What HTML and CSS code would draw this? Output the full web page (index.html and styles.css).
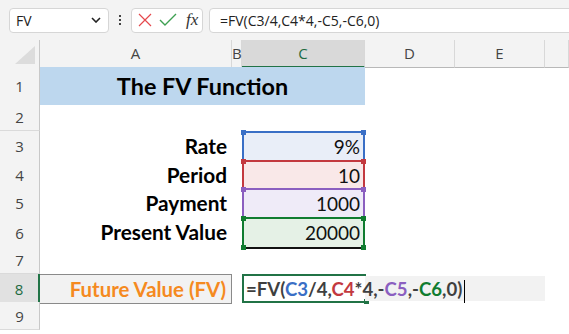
FILE: index.html
```html
<!DOCTYPE html>
<html lang="en">
<head>
    <meta charset="UTF-8">
    <title>FV Function</title>
    <link rel="stylesheet" href="styles.css">
</head>
<body>
    <div class="toolbar">
        <div class="namebox">
            <span>FV</span>
            <svg width="10" height="6" viewBox="0 0 10 6"><path d="M1 1 L5 5 L9 1" fill="none" stroke="#222" stroke-width="1.6"/></svg>
        </div>
        <div class="dots"><i></i><i></i><i></i></div>
        <div class="fxbox">
            <svg width="14" height="14" viewBox="0 0 14 14"><path d="M1 1 L13 13 M13 1 L1 13" stroke="#e5484d" stroke-width="1.2"/></svg>
            <svg width="18" height="14" viewBox="0 0 18 14"><path d="M1 7 L6 12 L17 1" fill="none" stroke="#3ea052" stroke-width="1.4"/></svg>
            <span class="fx">fx</span>
        </div>
        <div class="formula">=FV(C3/4,C4*4,-C5,-C6,0)</div>
    </div>

    <div class="sheet">
        <div class="row r-head">
            <div class="corner"><svg width="20" height="18" viewBox="0 0 20 18"><path d="M20 0 L20 18 L0 18 Z" fill="#dcdcdc"/></svg></div>
            <div class="colhead">A</div>
            <div class="colhead">B</div>
            <div class="colhead active">C</div>
            <div class="colhead">D</div>
            <div class="colhead">E</div>
            <div class="colhead"></div>
        </div>

        <div class="row r-title">
            <div class="rowhead">1</div>
            <div class="title">The FV Function</div>
        </div>

        <div class="row r-28">
            <div class="rowhead">2</div>
        </div>

        <div class="row r-29">
            <div class="rowhead">3</div>
            <div class="label">Rate</div>
            <div></div>
            <div class="value blue"><span class="sq tl"></span><span class="sq tr"></span>9%</div>
        </div>

        <div class="row r-28">
            <div class="rowhead">4</div>
            <div class="label">Period</div>
            <div></div>
            <div class="value red"><span class="sq tl"></span><span class="sq tr"></span>10</div>
        </div>

        <div class="row r-29">
            <div class="rowhead">5</div>
            <div class="label">Payment</div>
            <div></div>
            <div class="value purple"><span class="sq tl"></span><span class="sq tr"></span>1000</div>
        </div>

        <div class="row r-29">
            <div class="rowhead">6</div>
            <div class="label">Present Value</div>
            <div></div>
            <div class="value green last"><span class="sq tl"></span><span class="sq tr"></span><span class="sq bl"></span><span class="sq br"></span>20000</div>
        </div>

        <div class="row r-28">
            <div class="rowhead">7</div>
        </div>

        <div class="row r-28">
            <div class="rowhead active">8</div>
            <div class="result">Future Value (FV)</div>
            <div></div>
            <div class="editing">
                <div class="editbox"><span class="sq br"></span></div>
                <div class="edittext">=FV(<span class="c-blue">C3</span>/4,<span class="c-red">C4</span>*4,-<span class="c-purple">C5</span>,-<span class="c-green">C6</span>,0)<span class="caret"></span></div>
            </div>
        </div>

        <div class="row r-28">
            <div class="rowhead">9</div>
        </div>
    </div>
</body>
</html>
```

FILE: styles.css
```css
* {
    box-sizing: border-box;
}
body {
    margin: 0;
    width: 569px;
    height: 334px;
    overflow: hidden;
    background: #fff;
    font-family: Lato, "Open Sans", sans-serif;
}

/* formula bar */
.toolbar {
    height: 40px;
    background: #f3f3f3;
    display: flex;
    align-items: center;
    padding-left: 9px;
}
.namebox {
    width: 100px;
    height: 25px;
    background: #fff;
    border: 1px solid #d6d6d6;
    border-radius: 4px;
    display: flex;
    align-items: center;
    justify-content: space-between;
    padding: 0 7px 0 6px;
    font-family: "Open Sans", sans-serif;
    font-size: 14px;
    color: #222;
}
.dots {
    width: 22px;
    display: flex;
    flex-direction: column;
    align-items: center;
    gap: 2px;
}
.dots i {
    width: 2px;
    height: 2px;
    background: #444;
}
.fxbox {
    width: 72px;
    height: 25px;
    background: #fff;
    border: 1px solid #d6d6d6;
    border-radius: 4px;
    display: flex;
    align-items: center;
    gap: 7px;
    padding-left: 6px;
}
.fx {
    font-family: "Liberation Serif", serif;
    font-style: italic;
    font-size: 17px;
    color: #333;
    margin-left: 2px;
}
.formula {
    flex: 1;
    height: 25px;
    margin-left: 6px;
    margin-right: -8px;
    background: #fff;
    border: 1px solid #d6d6d6;
    border-radius: 4px;
    padding-left: 10px;
    font-family: "Open Sans", sans-serif;
    font-size: 14px;
    line-height: 23px;
    color: #222;
}

/* grid */
.row {
    display: grid;
    grid-template-columns: 40px 192px 10px 123px 90px 90px 1fr;
    height: 28px;
}
.r-head {
    height: 27px;
    background: #f3f3f3;
}
.r-title {
    height: 36px;
}
.r-29 {
    height: 29px;
}
.corner {
    border-right: 1px solid #c8c8c8;
    border-bottom: 1px solid #b8b8b8;
    display: flex;
    align-items: flex-end;
    justify-content: flex-end;
    padding: 0 4px 3px 0;
}
.colhead {
    border-right: 1px solid #d8d8d8;
    border-bottom: 1px solid #b8b8b8;
    font-family: "Open Sans", sans-serif;
    font-size: 15px;
    color: #444;
    text-align: center;
    line-height: 26px;
}
.colhead.active {
    background: #d9d9d9;
    color: #1e6b41;
    border-bottom: 2px solid #217346;
}
.rowhead {
    background: #f3f3f3;
    border-right: 1px solid #c8c8c8;
    border-bottom: 1px solid #dadada;
    font-family: "Open Sans", sans-serif;
    font-size: 15px;
    color: #444;
    display: flex;
    align-items: center;
    justify-content: center;
}
.rowhead.active {
    background: #e1e1e1;
    color: #1e6b41;
    border-right: 2px solid #217346;
}

.title {
    grid-column: 2 / 5;
    background: #bdd7ee;
    font-weight: bold;
    font-size: 23.4px;
    color: #000;
    text-align: center;
    line-height: 38px;
}
.label {
    font-weight: bold;
    font-size: 20.8px;
    color: #000;
    text-align: right;
    padding-right: 5px;
    line-height: 30px;
}
.value {
    position: relative;
    border: 2px solid;
    border-bottom: none;
    font-size: 19px;
    color: #111;
    text-align: right;
    padding-right: 3px;
    line-height: 28px;
}
.value.last {
    border-bottom: 2px solid;
}
.blue {
    border-color: #3a6fc6;
    background: #e9eef8;
}
.red {
    border-color: #c3393f;
    background: #f9e8e8;
}
.purple {
    border-color: #8b5fc0;
    background: #efebf8;
}
.green {
    border-color: #107c30;
    background: #e5f1e6;
}
.sq {
    position: absolute;
    width: 5px;
    height: 5px;
}
.blue .sq { background: #3a6fc6; }
.red .sq { background: #c3393f; }
.purple .sq { background: #8b5fc0; }
.green .sq { background: #107c30; }
.tl { top: -3px; left: -3px; }
.tr { top: -3px; right: -3px; }
.bl { bottom: -3px; left: -3px; }
.br { bottom: -3px; right: -3px; }

.result {
    background: #f2f2f2;
    border: 1px solid #8a8a8a;
    border-left: none;
    font-weight: bold;
    font-size: 20.4px;
    color: #f58a1f;
    text-align: right;
    padding-right: 5px;
    line-height: 28px;
}
.editing {
    grid-column: 4 / 7;
    position: relative;
}
.editbox {
    position: absolute;
    left: 0;
    top: 0;
    width: 124px;
    height: 29px;
    border: 2px solid #217346;
    border-right: none;
    background: #fff;
}
.editbox .sq {
    background: #217346;
}
.edittext {
    position: relative;
    margin: 2px 0 1px 0;
    height: 25px;
    padding-left: 4px;
    background: linear-gradient(to right, transparent 123px, #f2f2f2 123px);
    font-weight: bold;
    font-size: 18.6px;
    color: #3f3f3f;
    line-height: 26px;
    white-space: nowrap;
}
.c-blue { color: #3a6fc6; }
.c-red { color: #c3393f; }
.c-purple { color: #8b5fc0; }
.c-green { color: #107c30; }
.caret {
    display: inline-block;
    width: 1px;
    height: 23px;
    background: #000;
    vertical-align: middle;
    margin-left: 2px;
}
```
